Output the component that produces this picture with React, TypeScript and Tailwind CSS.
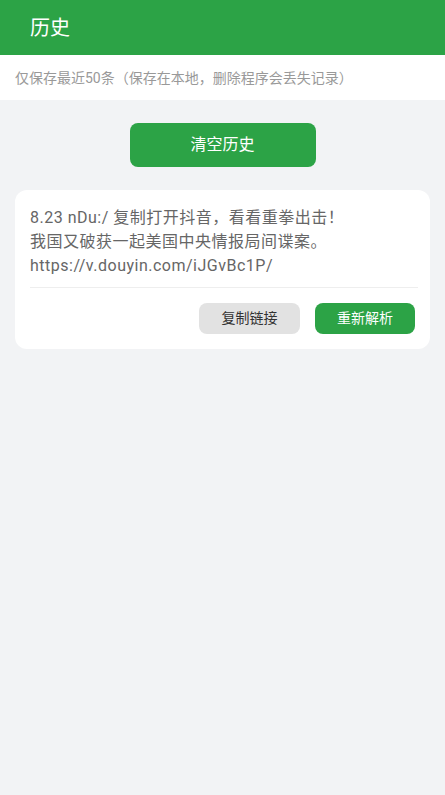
export default function App() {
  const font = { fontFamily: 'Roboto, "Noto Sans CJK SC", sans-serif' };

  return (
    <div className="min-h-[795px] bg-[#f2f3f5]" style={font}>
      {/* Header */}
      <header className="h-[55px] bg-[#2ca346] flex items-center px-[30px]">
        <h1 className="text-[20px] text-white leading-none">历史</h1>
      </header>

      {/* Notice */}
      <div className="h-[45px] bg-white flex items-center px-[15px]">
        <p className="text-[14px] text-[#999] leading-none">
          仅保存最近50条（保存在本地，删除程序会丢失记录）
        </p>
      </div>

      {/* Clear button */}
      <div className="flex justify-center pt-[23px]">
        <button className="w-[186px] h-[44px] rounded-[8px] bg-[#2ca346] text-white text-[16px]">
          清空历史
        </button>
      </div>

      {/* History list */}
      <div className="px-[15px] pt-[23px]">
        <div className="bg-white rounded-[12px] pl-[15px] pr-[12px] pt-[16px] pb-[15px]">
          <p className="text-[16px] leading-[24px] tracking-[0.5px] text-[#666] break-all">
            8.23 nDu:/ 复制打开抖音，看看重拳出击！
            <br />
            我国又破获一起美国中央情报局间谍案。
            <br />
            https://v.douyin.com/iJGvBc1P/
          </p>
          <div className="h-px bg-[#eee] mt-[9px]" />
          <div className="flex justify-end gap-[15px] pt-[15px] pr-[3px]">
            <button className="w-[101px] h-[31px] rounded-[8px] bg-[#e2e2e2] text-[#333] text-[14px]">
              复制链接
            </button>
            <button className="w-[100px] h-[31px] rounded-[8px] bg-[#2ca346] text-white text-[14px]">
              重新解析
            </button>
          </div>
        </div>
      </div>
    </div>
  );
}
